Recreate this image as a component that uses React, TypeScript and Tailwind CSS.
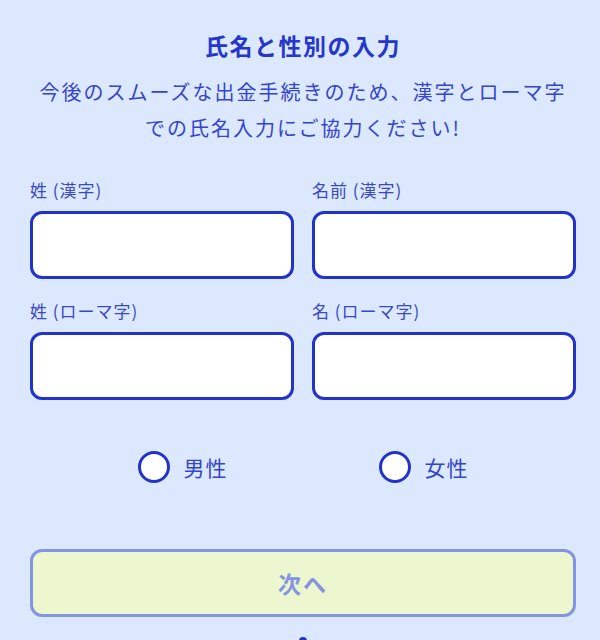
import React, { useState } from 'react';

const fieldDefs = [
  { id: 'lastKanji', label: '姓 (漢字)' },
  { id: 'firstKanji', label: '名前 (漢字)' },
  { id: 'lastRoman', label: '姓 (ローマ字)' },
  { id: 'firstRoman', label: '名 (ローマ字)' },
];

const App: React.FC = () => {
  const [values, setValues] = useState<Record<string, string>>({});
  const [gender, setGender] = useState<string>('');

  return (
    <div
      className="h-[640px] w-full overflow-hidden bg-[#dce8fd] pl-[30px] pr-[24px]"
      style={{ fontFamily: '"Noto Sans CJK JP", "Noto Sans", sans-serif' }}
    >
      <h1 className="pt-[31px] text-center text-[23px] font-bold leading-[28px] tracking-[1.5px] text-[#2536cc]">
        氏名と性別の入力
      </h1>
      <p className="mt-[15px] text-center text-[20px] leading-[36px] tracking-[2px] text-[#3445cc]">
        今後のスムーズな出金手続きのため、漢字とローマ字
        <br />
        での氏名入力にご協力ください!
      </p>

      <div className="mt-[33px] grid grid-cols-2 gap-x-[18px] gap-y-[21px]">
        {fieldDefs.map((f) => (
          <div key={f.id} className="flex flex-col">
            <label className="text-[17px] leading-[22px] tracking-[1px] text-[#3a48c4]">{f.label}</label>
            <input
              value={values[f.id] ?? ''}
              onChange={(e) => setValues({ ...values, [f.id]: e.target.value })}
              className="mt-[10px] h-[68px] w-full rounded-[12px] border-[3px] border-[#2233cc] bg-white px-3 text-[18px] outline-none"
            />
          </div>
        ))}
      </div>

      <div className="mt-[51px] flex justify-center gap-[151px]">
        {[
          { id: 'male', label: '男性' },
          { id: 'female', label: '女性' },
        ].map((g) => (
          <button key={g.id} onClick={() => setGender(g.id)} className="flex items-center gap-[14px]">
            <span className="flex h-[32px] w-[32px] items-center justify-center rounded-full border-[3px] border-[#2233cc] bg-white">
              {gender === g.id && <span className="h-[14px] w-[14px] rounded-full bg-[#2233cc]" />}
            </span>
            <span className="text-[21px] leading-[28px] tracking-[1px] text-[#3445cc]">{g.label}</span>
          </button>
        ))}
      </div>

      <button
        disabled
        className="mt-[66px] flex h-[68px] w-full items-center justify-center rounded-[12px] border-[3px] border-[#8494e2] bg-[#ecf6cf] text-[23px] font-bold tracking-[2px] text-[#8494e2]"
      >
        次へ
      </button>

      <div className="mt-[20px] flex justify-center">
        <span className="h-[8px] w-[8px] rounded-full bg-[#2233cc]" />
      </div>
    </div>
  );
};

export default App;
